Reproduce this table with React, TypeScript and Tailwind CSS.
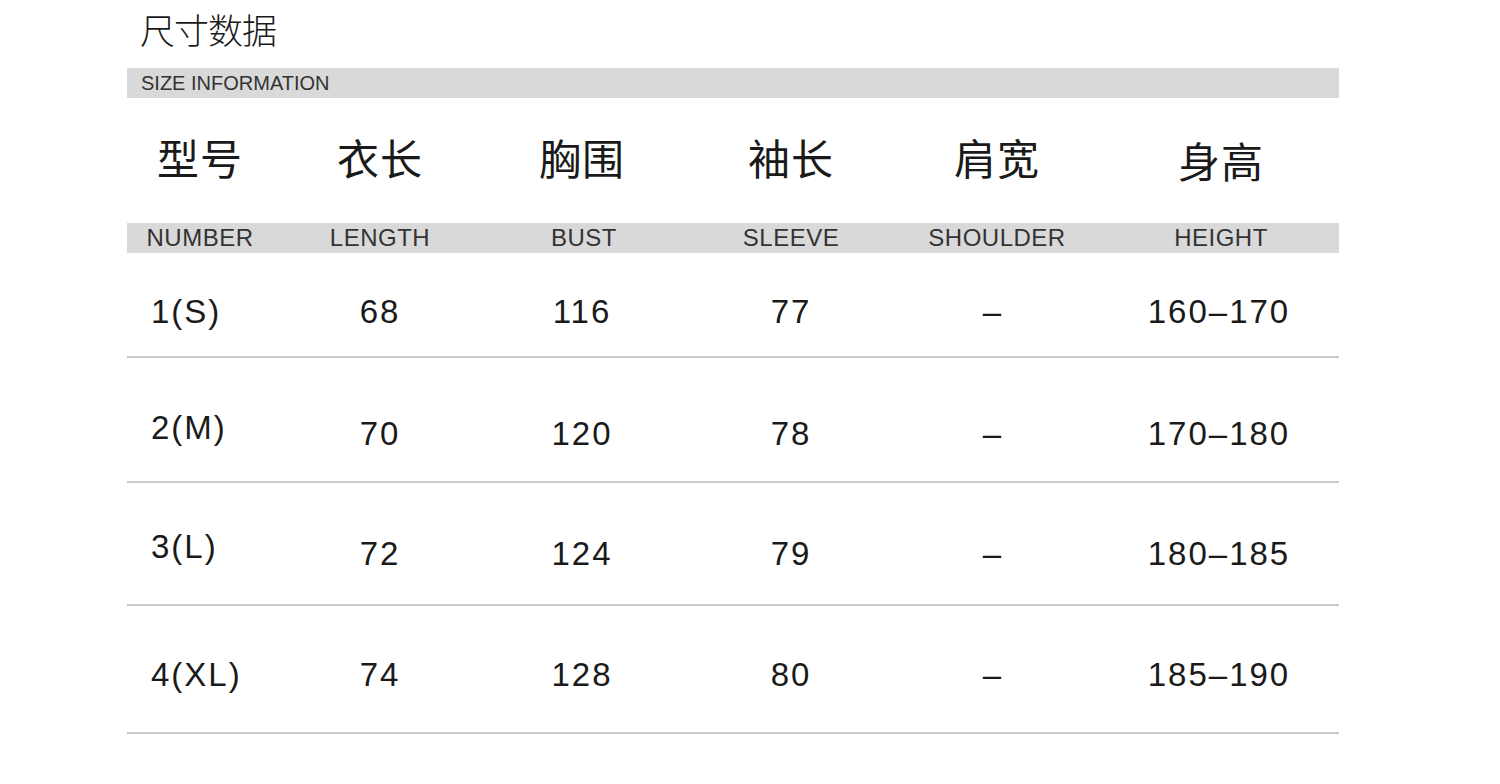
const FONT = "font-['Liberation_Sans','Noto_Sans_CJK_SC',sans-serif]";

const headers = [
  { zh: '型号', en: 'NUMBER' },
  { zh: '衣长', en: 'LENGTH' },
  { zh: '胸围', en: 'BUST' },
  { zh: '袖长', en: 'SLEEVE' },
  { zh: '肩宽', en: 'SHOULDER' },
  { zh: '身高', en: 'HEIGHT' },
];

// per-row spacing taken from the reference picture
const rows = [
  { cells: ['1(S)', '68', '116', '77', '–', '160–170'], h: 'h-[105px]', pt: 'pt-[39px]', shift: '' },
  { cells: ['2(M)', '70', '120', '78', '–', '170–180'], h: 'h-[125px]', pt: 'pt-[56px]', shift: '-translate-y-[6px]' },
  { cells: ['3(L)', '72', '124', '79', '–', '180–185'], h: 'h-[123px]', pt: 'pt-[51px]', shift: '-translate-y-[7px]' },
  { cells: ['4(XL)', '74', '128', '80', '–', '185–190'], h: 'h-[128px]', pt: 'pt-[49px]', shift: '' },
];

const cols = 'grid grid-cols-[146px_214px_190px_228px_184px_250px]';

const App = () => {
  return (
    <div className={`w-[1500px] h-[784px] bg-white text-[#1a1a1a] ${FONT} overflow-hidden`}>
      <div className="ml-[127px] w-[1212px]">
        {/* Title */}
        <div className="h-[68px] pt-[14px] pl-[13px]">
          <div className="text-[35px] leading-[35px] font-light tracking-[-1px]">尺寸数据</div>
        </div>

        <div className="h-[30px] bg-[#d9d9d9] flex items-center pl-[14px]">
          <span className="text-[20px] leading-none text-[#333]">SIZE INFORMATION</span>
        </div>

        {/* Chinese headers */}
        <div className={`${cols} h-[125px] items-center`}>
          {headers.map((c, i) => (
            <div
              key={c.zh}
              className={`text-center text-[42px] leading-none tracking-[1px] ${i === 5 ? 'pl-[14px] translate-y-[3px]' : ''}`}
            >
              {c.zh}
            </div>
          ))}
        </div>

        {/* English headers */}
        <div className={`${cols} h-[30px] bg-[#d9d9d9] items-center`}>
          {headers.map((c, i) => (
            <div
              key={c.en}
              className={`text-center text-[24px] leading-none tracking-[0.5px] text-[#333] ${i === 5 ? 'pl-[14px]' : ''} ${i === 2 ? 'pl-[4px]' : ''}`}
            >
              {c.en}
            </div>
          ))}
        </div>

        {/* Data rows */}
        {rows.map((r) => (
          <div key={r.cells[0]} className={`${cols} ${r.h} ${r.pt} border-b-2 border-[#cbcbcb] items-start`}>
            {r.cells.map((v, i) => (
              <div
                key={i}
                className={`text-[33px] leading-[40px] tracking-[2px] ${
                  i === 0 ? `pl-[24px] text-left ${r.shift}` : 'text-center'
                } ${i === 5 ? 'pl-[10px]' : ''} ${i === 4 ? 'pr-[8px]' : ''}`}
              >
                {v}
              </div>
            ))}
          </div>
        ))}
      </div>
    </div>
  );
};

export default App;
